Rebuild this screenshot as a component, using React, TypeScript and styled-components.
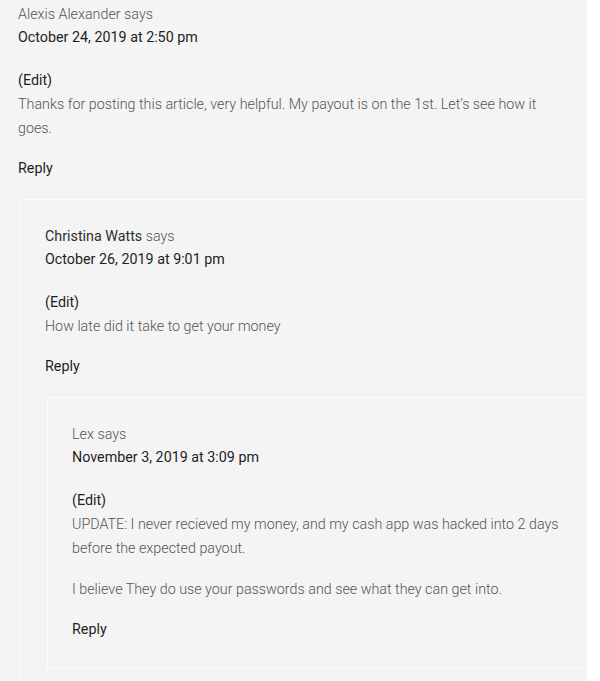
import React from 'react';
import styled, { createGlobalStyle } from 'styled-components';

type CommentData = {
    id: number;
    author: string;
    authorLink?: boolean;
    date: string;
    paragraphs: string[];
    replies?: CommentData[];
}

const comments: CommentData[] = [
    {
        id: 1,
        author: 'Alexis Alexander',
        date: 'October 24, 2019 at 2:50 pm',
        paragraphs: ["Thanks for posting this article, very helpful. My payout is on the 1st. Let\u2019s see how it goes."],
        replies: [
            {
                id: 2,
                author: 'Christina Watts',
                authorLink: true,
                date: 'October 26, 2019 at 9:01 pm',
                paragraphs: ['How late did it take to get your money'],
                replies: [
                    {
                        id: 3,
                        author: 'Lex',
                        date: 'November 3, 2019 at 3:09 pm',
                        paragraphs: [
                            'UPDATE: I never recieved my money, and my cash app was hacked into 2 days before the expected payout.',
                            'I believe They do use your passwords and see what they can get into.',
                        ],
                    },
                ],
            },
        ],
    },
]

const GlobalStyle = createGlobalStyle`
    html, body {
        margin: 0;
        padding: 0;
        background: #ffffff;
    }
    body {
        font-family: Roboto, "Liberation Sans", sans-serif;
        -webkit-font-smoothing: antialiased;
    }
`

const Page = styled.div`
    width: 587px;
    min-height: 681px;
    box-sizing: border-box;
    padding: 3px 0 0 18px;
    background: #f4f4f4;
    overflow: hidden;
`

const CommentBody = styled.article`
    display: flex;
    flex-direction: column;
`

const Meta = styled.div`
    display: flex;
    flex-direction: column;
    font-size: 14.3px;
    line-height: 23px;
`

const Author = styled.div`
    color: #555555;
    font-weight: 300;
`

const AuthorName = styled.span<{ $link?: boolean }>`
    color: ${p => p.$link ? '#2e2e2e' : '#555555'};
    font-weight: ${p => p.$link ? 400 : 300};
`

const DateLine = styled.div`
    color: #1e1e1e;
    font-weight: 400;
`

const Content = styled.div`
    margin-top: 19px;
    font-size: 14.3px;
    line-height: 24px;
`

const EditLink = styled.div`
    color: #1e1e1e;
    font-weight: 400;
`

const Paragraph = styled.p`
    margin: 0 0 17px;
    color: #555555;
    font-weight: 300;
    padding-right: 22px;

    &:last-child {
        margin-bottom: 0;
    }
`

const Reply = styled.div`
    margin-top: 16px;
    font-size: 14.3px;
    line-height: 24px;
    color: #1e1e1e;
`

const Children = styled.div`
    margin: 19px 0 0 2px;
    padding: 25px 0 27px 24px;
    border: 1px solid #fdfdfd;
    border-right: none;
    background: #f4f4f4;
`

const Comment = ({ value }: { value: CommentData }) => (
    <CommentBody>
        <Meta>
            <Author>
                <AuthorName $link={value.authorLink}>{value.author}</AuthorName> says
            </Author>
            <DateLine>{value.date}</DateLine>
        </Meta>
        <Content>
            <EditLink>(Edit)</EditLink>
            {value.paragraphs.map((text, i) => (
                <Paragraph key={i}>{text}</Paragraph>
            ))}
        </Content>
        <Reply>Reply</Reply>
        {value.replies && value.replies.map(child => (
            <Children key={child.id}>
                <Comment value={child} />
            </Children>
        ))}
    </CommentBody>
)

export default function App() {
    return (
        <>
            <GlobalStyle />
            <Page>
                {comments.map(c => (
                    <Comment key={c.id} value={c} />
                ))}
            </Page>
        </>
    )
}
